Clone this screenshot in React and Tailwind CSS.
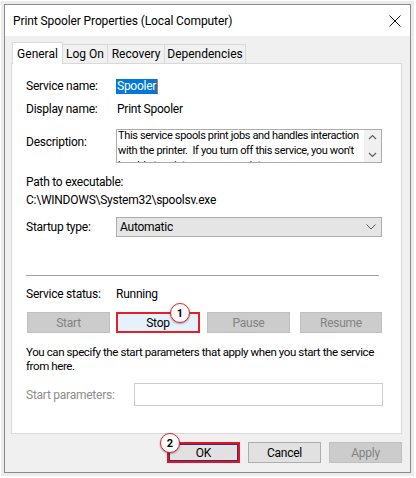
import React from 'react';

const FONT = "font-['Segoe_UI',Roboto,sans-serif]";

function Badge({ n, className }) {
  return (
    <div
      className={`absolute w-[20px] h-[20px] rounded-full bg-white border-[1.5px] border-[#e3202a] shadow-[0_1px_2px_rgba(0,0,0,0.35)] flex items-center justify-center text-[11px] font-bold text-black leading-none tracking-normal ${className}`}
    >
      {n}
    </div>
  );
}

function Btn({ children, disabled, className = '' }) {
  const look = disabled
    ? 'bg-[#cccccc] border border-[#bfbfbf] text-[#838383]'
    : 'bg-[#e1e1e1] border border-[#adadad] text-black';
  return (
    <div className={`h-[21px] flex items-center justify-center text-[12px] ${look} ${className}`}>
      {children}
    </div>
  );
}

export default function App() {
  return (
    <div className={`w-[416px] h-[478px] bg-white pt-[4px] pl-[4px] ${FONT}`}>
      <div className="w-[407px] h-[469px] border border-[#8a8a8a] shadow-[0_0_0_3px_#ececec] flex flex-col bg-[#f0f0f0]">
        {/* Title bar */}
        <div className="h-[31px] bg-white flex items-center justify-between pl-[8px] pr-[9px] text-[12px] text-black tracking-[-0.1px]">
          <span>Print Spooler Properties (Local Computer)</span>
          <svg width="12" height="12" viewBox="0 0 12 12" className="mt-[1px]">
            <path d="M0.5 0.5 L11.5 11.5 M11.5 0.5 L0.5 11.5" stroke="#111" strokeWidth="1" />
          </svg>
        </div>

        {/* Body */}
        <div className="flex-1 flex flex-col pl-[6px] pr-[8px] pt-[6px] tracking-[-0.25px]">
          {/* Tabs */}
          <div className="flex items-end pl-[1px] h-[21px] text-[12px] tracking-normal">
            <div className="relative z-10 h-[22px] -mb-[1px] w-[51px] bg-white border border-b-0 border-[#d9d9d9] flex items-start justify-center pt-[2px]">
              General
            </div>
            <div className="h-[19px] w-[45px] border border-l-0 border-b-0 border-[#d9d9d9] flex items-center justify-center">
              Log On
            </div>
            <div className="h-[19px] w-[57px] border border-l-0 border-b-0 border-[#d9d9d9] flex items-center justify-center">
              Recovery
            </div>
            <div className="h-[19px] w-[81px] border border-l-0 border-b-0 border-[#d9d9d9] flex items-center justify-center">
              Dependencies
            </div>
          </div>

          {/* Panel */}
          <div className="relative h-[371px] bg-white border border-[#d9d9d9] pl-[14px] flex flex-col text-[12px] text-black leading-[16px]">
            <div className="mt-[14px] h-[16px] flex items-center">
              <span className="w-[90px]">Service name:</span>
              <span className="bg-[#0078d7] text-white h-[15px] px-[1px] flex items-center border-r border-[#e0731f]">Spooler</span>
            </div>
            <div className="mt-[7px] h-[16px] flex items-center">
              <span className="w-[90px]">Display name:</span>
              <span className="pl-[1px]">Print Spooler</span>
            </div>
            <div className="mt-[12px] flex">
              <span className="w-[90px] pt-[5px]">Description:</span>
              <div className="w-[266px] h-[34px] border border-[#acacac] flex overflow-hidden">
                <div className="flex-1 pl-[1px] overflow-hidden">
                  <p className="-mt-[2px] text-[11px] leading-[15px] tracking-[-0.35px]">
                    This service spools print jobs and handles interaction with the printer.&nbsp; If you turn off this service, you won't be able to print or see your printers.
                  </p>
                </div>
                <div className="w-[17px] bg-[#f0f0f0] flex flex-col items-center justify-between py-[4px]">
                  <svg width="9" height="6" viewBox="0 0 9 6">
                    <path d="M1 5 L4.5 1.5 L8 5" stroke="#606060" strokeWidth="1.2" fill="none" />
                  </svg>
                  <svg width="9" height="6" viewBox="0 0 9 6">
                    <path d="M1 1 L4.5 4.5 L8 1" stroke="#606060" strokeWidth="1.2" fill="none" />
                  </svg>
                </div>
              </div>
            </div>
            <div className="mt-[11px] h-[16px]">Path to executable:</div>
            <div className="mt-[2px] h-[16px]">C:\WINDOWS\System32\spoolsv.exe</div>
            <div className="mt-[9px] flex items-center">
              <span className="w-[90px]">Startup type:</span>
              <div className="w-[266px] h-[20px] bg-[#e5e5e5] border border-[#acacac] flex items-center justify-between pl-[3px] pr-[5px]">
                <span>Automatic</span>
                <svg width="10" height="6" viewBox="0 0 10 6">
                  <path d="M0.5 0.5 L5 5 L9.5 0.5" stroke="#5a5a5a" strokeWidth="1" fill="none" />
                </svg>
              </div>
            </div>
            <div className="mt-[38px] w-[353px] h-[1px] bg-[#a0a0a0]" />
            <div className="mt-[10px] h-[16px] flex items-center">
              <span className="w-[90px]">Service status:</span>
              <span>Running</span>
            </div>
            <div className="mt-[10px] flex">
              <Btn disabled className="ml-[1px] w-[83px]">Start</Btn>
              <div className="relative ml-[6px]">
                <div className="w-[84px] h-[21px] bg-[#e5f1fb] border-2 border-[#e3202a] flex items-center justify-center">
                  Stop
                </div>
                <Badge n="1" className="-top-[9px] left-[54px]" />
              </div>
              <Btn disabled className="ml-[7px] w-[83px]">Pause</Btn>
              <Btn disabled className="ml-[10px] w-[82px]">Resume</Btn>
            </div>
            <p className="mt-[12px] w-[362px] text-[11.5px] leading-[14px] tracking-[-0.4px]">
              You can specify the start parameters that apply when you start the service from here.
            </p>
            <div className="mt-[10px] flex items-center">
              <span className="w-[108px] text-[#8d8d8d]">Start parameters:</span>
              <div className="w-[249px] h-[23px] border border-[#cccccc] bg-white" />
            </div>
          </div>

          {/* Footer buttons */}
          <div className="flex justify-end mt-[8px] text-[12px]">
            <div className="relative">
              <div className="w-[73px] h-[21px] bg-[#e1e1e1] border-2 border-[#e3141f] shadow-[inset_0_0_0_1px_#3b2f78] flex items-center justify-center">
                OK
              </div>
              <Badge n="2" className="-top-[9px] -left-[7px]" />
            </div>
            <Btn className="ml-[8px] w-[73px]">Cancel</Btn>
            <Btn disabled className="ml-[8px] w-[73px]">Apply</Btn>
          </div>
        </div>
      </div>
    </div>
  );
}
